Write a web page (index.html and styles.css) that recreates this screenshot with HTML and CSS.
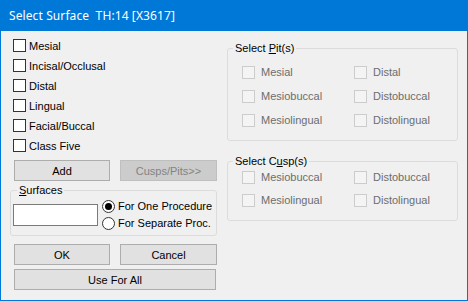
FILE: index.html
```html
<!DOCTYPE html>
<html>
<head>
<meta charset="utf-8">
<link rel="stylesheet" href="styles.css">
</head>
<body>
<div class="window">
  <div class="titlebar"><span class="title">Select Surface  TH:14 [X3617]</span></div>
  <div class="client">
    <div class="leftcol">
      <ul class="surface-list">
        <li class="check"><span class="box"></span><span class="lbl">Mesial</span></li>
        <li class="check"><span class="box"></span><span class="lbl">Incisal/Occlusal</span></li>
        <li class="check"><span class="box"></span><span class="lbl">Distal</span></li>
        <li class="check"><span class="box"></span><span class="lbl">Lingual</span></li>
        <li class="check"><span class="box"></span><span class="lbl">Facial/Buccal</span></li>
        <li class="check"><span class="box"></span><span class="lbl">Class Five</span></li>
      </ul>
      <div class="btn-row">
        <button class="btn half">Add</button>
        <button class="btn half disabled">Cusps/Pits&gt;&gt;</button>
      </div>
      <fieldset class="group surfaces">
        <legend><u>S</u>urfaces</legend>
        <div class="surf-body">
          <input class="surf-input" type="text">
          <div class="radios">
            <label class="radio"><span class="circle checked"></span>For One Procedure</label>
            <label class="radio"><span class="circle"></span>For Separate Proc.</label>
          </div>
        </div>
      </fieldset>
      <div class="btn-row ok-row">
        <button class="btn half">OK</button>
        <button class="btn half">Cancel</button>
      </div>
      <button class="btn wide">Use For All</button>
    </div>
    <div class="rightcol">
      <fieldset class="group pits">
        <legend>Select <u>P</u>it(s)</legend>
        <div class="dgrid">
          <div class="dcheck"><span class="dbox"></span>Mesial</div>
          <div class="dcheck"><span class="dbox"></span>Distal</div>
          <div class="dcheck"><span class="dbox"></span>Mesiobuccal</div>
          <div class="dcheck"><span class="dbox"></span>Distobuccal</div>
          <div class="dcheck"><span class="dbox"></span>Mesiolingual</div>
          <div class="dcheck"><span class="dbox"></span>Distolingual</div>
        </div>
      </fieldset>
      <fieldset class="group cusps">
        <legend>Select C<u>u</u>sp(s)</legend>
        <div class="dgrid cgrid">
          <div class="dcheck"><span class="dbox"></span>Mesiobuccal</div>
          <div class="dcheck"><span class="dbox"></span>Distobuccal</div>
          <div class="dcheck"><span class="dbox"></span>Mesiolingual</div>
          <div class="dcheck"><span class="dbox"></span>Distolingual</div>
        </div>
      </fieldset>
    </div>
  </div>
</div>
</body>
</html>
```

FILE: styles.css
```css
* { box-sizing: border-box; }
html, body { margin: 0; padding: 0; }
body {
  font-family: "Liberation Sans", Arial, sans-serif;
  font-size: 11px;
  color: #000;
  background: #f0f0f0;
}
.window {
  width: 468px;
  height: 301px;
  background: #f0f0f0;
  border: 1px solid #0078d7;
  border-top: 0;
  display: flex;
  flex-direction: column;
}
.titlebar {
  height: 31px;
  margin: 0 -1px;
  background: #0078d7;
  color: #fff;
  display: flex;
  align-items: center;
  padding-left: 9px;
}
.title {
  white-space: pre;
  font-family: "Noto Sans", "Open Sans", sans-serif;
  font-size: 12px;
  line-height: 16px;
  padding-top: 1px;
  letter-spacing: 0.1px;
}
.client {
  display: flex;
  padding: 5px 0 0 9px;
  gap: 10px;
}
.leftcol {
  width: 207px;
  display: flex;
  flex-direction: column;
}
.surface-list {
  list-style: none;
  margin: 0 0 0 3px;
  padding: 0;
}
.check {
  height: 20px;
  line-height: 20px;
  display: flex;
  align-items: flex-start;
}
.box {
  width: 13px;
  height: 13px;
  margin-top: 3px;
  border: 1px solid #333;
  background: #fff;
  flex: none;
}
.lbl { margin-left: 3px; }
.btn-row {
  display: flex;
  gap: 10px;
  margin: 4px 0 0 4px;
}
.btn {
  height: 21px;
  padding: 0;
  border: 1px solid #adadad;
  background: #e1e1e1;
  font-family: "Liberation Sans", Arial, sans-serif;
  font-size: 11px;
  color: #000;
}
.half { width: 96px; }
.half + .half { width: 97px; }
.btn.disabled {
  background: #cccccc;
  border-color: #bfbfbf;
  color: #838383;
}
.wide {
  width: 202px;
  margin: 4px 0 0 4px;
}
.ok-row { margin-top: 8px; }
.group {
  border: 1px solid #dcdcdc;
  border-radius: 3px;
  margin: 0;
  min-width: 0;
}
.group legend {
  padding: 0 2px;
  line-height: 13px;
  font-size: 11px;
}
.surfaces {
  margin-top: 3px;
  padding: 0 0 3px 2px;
}
.surfaces legend { margin-left: 4px; }
.surf-body {
  height: 35px;
  display: flex;
  align-items: center;
}
.surf-input {
  width: 85px;
  height: 22px;
  border: 1px solid #7a7a7a;
  background: #fff;
  margin: 0;
  padding: 0;
}
.radios {
  margin-left: 4px;
  display: flex;
  flex-direction: column;
}
.radio {
  height: 17px;
  display: flex;
  align-items: center;
  white-space: nowrap;
}
.circle {
  width: 13px;
  height: 13px;
  border-radius: 50%;
  border: 1px solid #333;
  background: #fff;
  margin-right: 3px;
  flex: none;
  position: relative;
}
.circle.checked::after {
  content: "";
  position: absolute;
  left: 2px;
  top: 2px;
  width: 7px;
  height: 7px;
  border-radius: 50%;
  background: #000;
}
.rightcol {
  width: 231px;
  display: flex;
  flex-direction: column;
}
.pits {
  margin-top: 6px;
  padding: 8px 0 11px 0;
}
.pits legend, .cusps legend { margin-left: 5px; }
.cusps {
  margin-top: 14px;
  padding: 0 0 11px 0;
}
.dgrid {
  display: grid;
  grid-template-columns: 112px auto;
  row-gap: 6px;
  padding-left: 14px;
  color: #6d6d6d;
}
.cgrid { row-gap: 5px; }
.dcheck {
  height: 18px;
  line-height: 18px;
  display: flex;
  align-items: center;
  white-space: nowrap;
}
.dbox {
  width: 13px;
  height: 13px;
  border: 1px solid #cccccc;
  background: #f4f4f4;
  margin-right: 6px;
  flex: none;
}
```
